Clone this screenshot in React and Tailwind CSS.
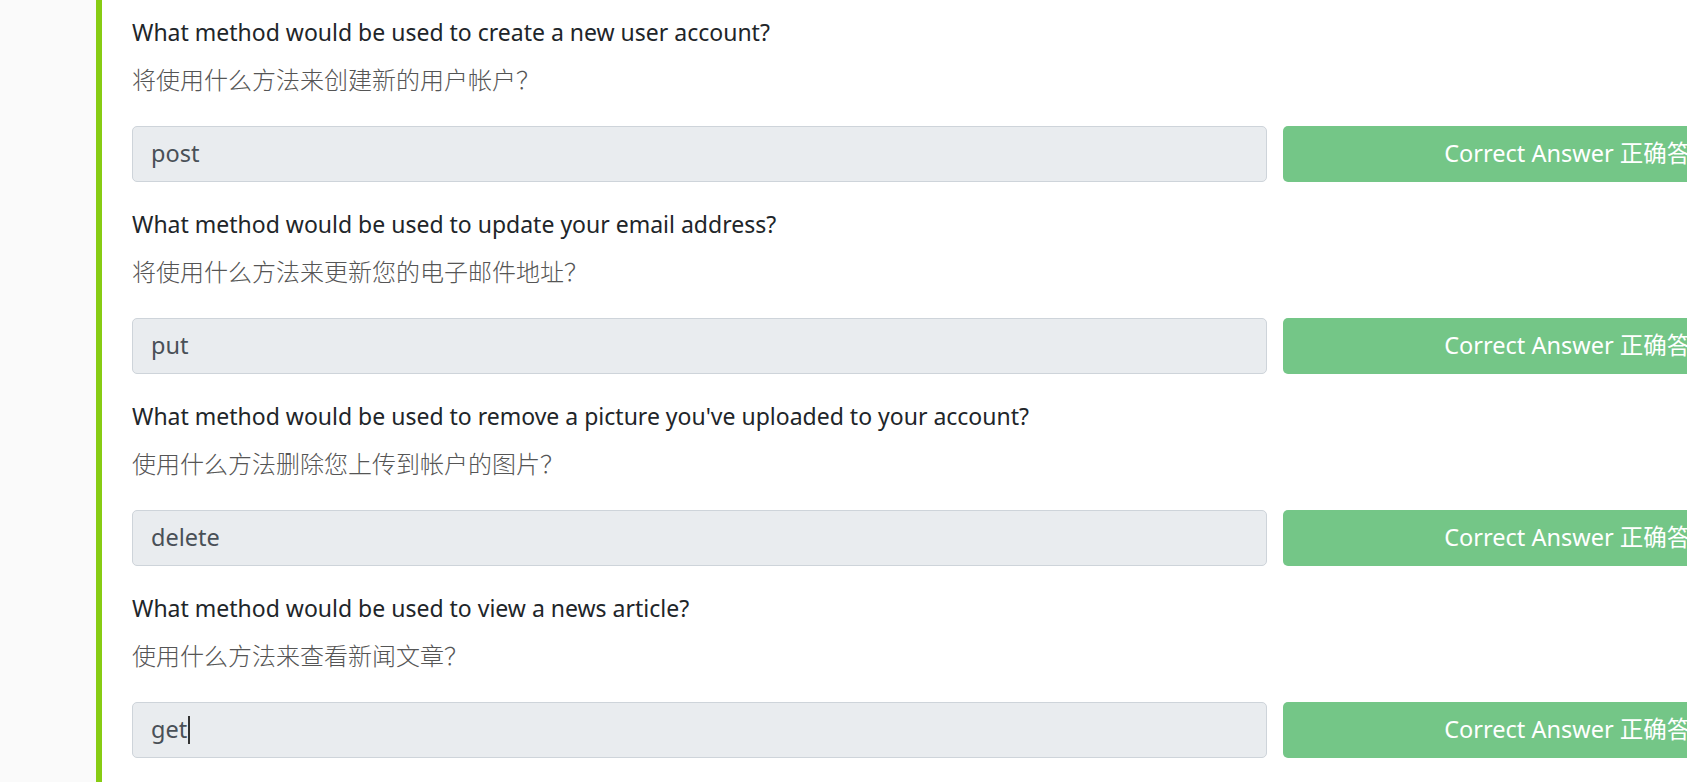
const questions = [
  {
    en: "What method would be used to create a new user account?",
    zh: "将使用什么方法来创建新的用户帐户？",
    answer: "post",
  },
  {
    en: "What method would be used to update your email address?",
    zh: "将使用什么方法来更新您的电子邮件地址？",
    answer: "put",
  },
  {
    en: "What method would be used to remove a picture you've uploaded to your account?",
    zh: "使用什么方法删除您上传到帐户的图片？",
    answer: "delete",
  },
  {
    en: "What method would be used to view a news article?",
    zh: "使用什么方法来查看新闻文章？",
    answer: "get",
    focused: true,
  },
];

function QuestionBlock({ q }) {
  return (
    <div className="mb-[24px]">
      <p className="text-[23px] leading-[36px] text-[#212529]">{q.en}</p>
      <p className="mt-[11px] font-['Noto_Sans_CJK_SC',sans-serif] text-[24px] font-light leading-[36px] text-[#555]">
        {q.zh}
      </p>
      <div className="mt-[29px] flex gap-4">
        <div className="flex h-[56px] w-[1135px] shrink-0 items-center rounded-[5px] border border-[#ced4da] bg-[#e9ecef] px-[18px] text-[23.5px] text-[#495057]">
          {q.answer}
          {q.focused && <span className="ml-[1px] h-[28px] w-[2px] bg-[#333]" />}
        </div>
        <button className="flex h-[56px] w-[592px] shrink-0 items-center justify-center rounded-[5px] bg-[#74c687] text-[23.5px] text-white">
          Correct Answer 正确答案
        </button>
      </div>
    </div>
  );
}

export default function App() {
  return (
    <div className="flex h-[782px] w-full overflow-hidden bg-white font-['Noto_Sans','Noto_Sans_CJK_SC',sans-serif]">
      <div className="w-[96px] shrink-0 bg-[#fafafa]" />
      <div className="w-[6px] shrink-0 bg-[#87cc13]" />
      <div className="pl-[30px] pt-[14px]">
        {questions.map((q, i) => (
          <QuestionBlock key={i} q={q} />
        ))}
      </div>
    </div>
  );
}
